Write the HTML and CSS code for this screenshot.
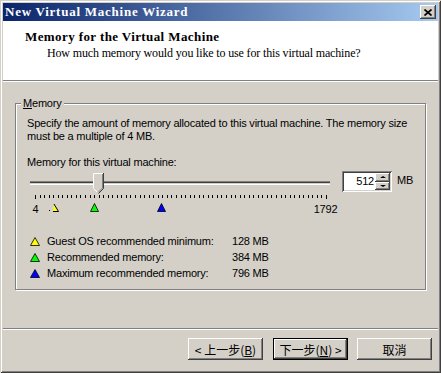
FILE: index.html
```html
<!DOCTYPE html>
<html lang="en">
<head>
  <meta charset="UTF-8">
  <title>New Virtual Machine Wizard</title>
  <link rel="stylesheet" href="styles.css">
</head>
<body>
  <div class="window">
    <!-- Title bar -->
    <div class="titlebar">
      <span class="title">New Virtual Machine Wizard</span>
      <button class="close" aria-label="Close">
        <svg width="8" height="7" viewBox="0 0 8 7"><path d="M0.5 0.5L7.5 6.5M7.5 0.5L0.5 6.5" stroke="#000" stroke-width="1.7"/></svg>
      </button>
    </div>

    <!-- Wizard header -->
    <div class="header">
      <div class="heading">Memory for the Virtual Machine</div>
      <div class="subheading">How much memory would you like to use for this virtual machine?</div>
    </div>

    <!-- Page content -->
    <div class="content">
      <fieldset class="group">
        <legend><u>M</u>emory</legend>
        <div class="group-body">
          <p class="desc">Specify the amount of memory allocated to this virtual machine. The memory size<br>must be a multiple of 4 MB.</p>
          <div class="field-label">Memory for this virtual machine:</div>

          <div class="slider-row">
            <svg class="slider" width="310" height="50" viewBox="0 0 310 50">
              <!-- channel -->
              <rect x="3" y="12" width="300" height="1" fill="#808080"/>
              <rect x="3" y="13" width="300" height="1" fill="#404040"/>
              <rect x="3" y="14" width="300" height="1" fill="#d4d0c8"/>
              <rect x="3" y="15" width="300" height="1" fill="#fff"/>
              <!-- ticks -->
              <path stroke="#000" stroke-width="1" d="M8.5 26v4M13.5 26v3M17.5 26v3M22.5 26v3M26.5 26v3M31.5 26v3M35.5 26v3M40.5 26v3M44.5 26v3M49.5 26v3M53.5 26v3M58.5 26v3M63.5 26v3M67.5 26v3M72.5 26v3M76.5 26v3M81.5 26v3M85.5 26v3M90.5 26v3M94.5 26v3M99.5 26v3M103.5 26v3M108.5 26v3M113.5 26v3M117.5 26v3M122.5 26v3M126.5 26v3M131.5 26v3M135.5 26v3M140.5 26v3M144.5 26v3M149.5 26v3M154.5 26v3M158.5 26v3M163.5 26v3M167.5 26v3M172.5 26v3M176.5 26v3M181.5 26v3M185.5 26v3M190.5 26v3M194.5 26v3M199.5 26v3M204.5 26v3M208.5 26v3M213.5 26v3M217.5 26v3M222.5 26v3M226.5 26v3M231.5 26v3M235.5 26v3M240.5 26v3M244.5 26v3M249.5 26v3M254.5 26v3M258.5 26v3M263.5 26v3M267.5 26v3M272.5 26v3M276.5 26v3M281.5 26v3M285.5 26v3M290.5 26v3M294.5 26v3M299.5 26v4"/>
              <!-- thumb -->
              <path d="M66 4h10v15l-5 5l-5-5z" fill="#d4d0c8"/>
              <path d="M66.5 19V4.5H76" stroke="#fff" fill="none"/>
              <path d="M66.5 19.5l4 4" stroke="#fff" fill="none"/>
              <path d="M76.5 4v15.5l-5 5" stroke="#404040" fill="none"/>
              <path d="M75.5 5v14l-4.5 4.5" stroke="#808080" fill="none"/>
              <!-- markers -->
              <rect x="22" y="41" width="1" height="1" fill="#000"/>
              <polygon points="26,42 27,35 31,42" fill="#ffff00"/>
              <path d="M27 35L31.5 42.5H26" stroke="#000" fill="none"/>
              <polygon points="63.5,42.5 67.5,34.5 71.5,42.5" fill="#00ff00" stroke="#000" stroke-width="0.8"/>
              <polygon points="130.5,42.5 134.5,34.5 138.5,42.5" fill="#0000ff" stroke="#000" stroke-width="0.8"/>
              <!-- scale labels -->
              <text x="8.5" y="44" text-anchor="middle">4</text>
              <text x="298.5" y="44" text-anchor="middle">1792</text>
            </svg>

            <div class="spin">
              <span class="spin-value">512</span>
              <div class="spin-btns">
                <span class="spin-btn up"></span>
                <span class="spin-btn down"></span>
              </div>
            </div>
            <span class="unit">MB</span>
          </div>

          <ul class="legend-list">
            <li>
              <svg class="marker" width="10" height="9" viewBox="0 0 10 9"><polygon points="0.5,8.5 5,0.5 9.5,8.5" fill="#ffff00" stroke="#000" stroke-width="0.8"/></svg>
              <span class="name">Guest OS recommended minimum:</span>
              <span class="value">128 MB</span>
            </li>
            <li>
              <svg class="marker" width="10" height="9" viewBox="0 0 10 9"><polygon points="0.5,8.5 5,0.5 9.5,8.5" fill="#00ff00" stroke="#000" stroke-width="0.8"/></svg>
              <span class="name">Recommended memory:</span>
              <span class="value">384 MB</span>
            </li>
            <li>
              <svg class="marker" width="10" height="9" viewBox="0 0 10 9"><polygon points="0.5,8.5 5,0.5 9.5,8.5" fill="#0000ff" stroke="#000" stroke-width="0.8"/></svg>
              <span class="name">Maximum recommended memory:</span>
              <span class="value">796 MB</span>
            </li>
          </ul>
        </div>
      </fieldset>
    </div>

    <!-- Wizard buttons -->
    <div class="buttons">
      <button class="btn back">&lt; 上一步(<u>B</u>)</button>
      <button class="btn next default">下一步(<u>N</u>) &gt;</button>
      <button class="btn">取消</button>
    </div>
  </div>
</body>
</html>
```

FILE: styles.css
```css
body {
  margin: 0;
  font-family: "Liberation Sans", Arial, sans-serif;
  font-size: 11px;
  letter-spacing: -0.2px;
  color: #000;
}

.window {
  width: 441px;
  height: 373px;
  box-sizing: border-box;
  padding: 3px;
  background: #d4d0c8;
  box-shadow: inset 1px 1px #d4d0c8, inset -1px -1px #404040, inset 2px 2px #fff, inset -2px -2px #808080;
  display: flex;
  flex-direction: column;
}

/* title bar */
.titlebar {
  height: 18px;
  flex: none;
  display: flex;
  align-items: center;
  justify-content: space-between;
  padding: 0 2px;
  background: linear-gradient(to right, #0a246a, #a6caf0);
}

.title {
  color: #fff;
  font: bold 13px "Liberation Serif", serif;
  letter-spacing: 0.75px;
}

.close {
  width: 16px;
  height: 14px;
  padding: 0;
  border: 0;
  background: #d4d0c8;
  box-shadow: inset -1px -1px #404040, inset 1px 1px #fff, inset -2px -2px #808080;
  display: flex;
  align-items: center;
  justify-content: center;
}

.close svg {
  display: block;
}

/* header */
.header {
  height: 60px;
  flex: none;
  box-sizing: border-box;
  padding: 8px 0 0 22px;
  background: #fff;
  border-bottom: 1px solid #808080;
  font-family: "Liberation Serif", serif;
  line-height: 16px;
}

.heading {
  font-size: 13px;
  font-weight: bold;
  letter-spacing: 0.4px;
}

.subheading {
  margin-left: 22px;
  font-size: 12px;
  letter-spacing: -0.15px;
}

/* content */
.content {
  flex: 1;
  border-top: 1px solid #fff;
  padding: 15px 12px 0;
}

.group {
  margin: 0;
  padding: 0;
  min-width: 0;
  border: 1px solid #808080;
  box-shadow: inset 1px 1px #fff, 1px 1px #fff;
}

.group legend {
  margin-left: 5px;
  padding: 0 2px;
  line-height: 13px;
  background: #d4d0c8;
}

.group-body {
  padding: 7px 11px 8px;
}

.desc {
  margin: 0;
  line-height: 13px;
}

.field-label {
  margin-top: 13px;
  line-height: 13px;
}

.slider-row {
  display: flex;
  align-items: flex-start;
}

.slider {
  display: block;
  overflow: visible;
  font-size: 11px;
}

.spin {
  margin: 2px 0 0 5px;
  width: 50px;
  height: 21px;
  box-sizing: border-box;
  padding: 2px;
  display: flex;
  background: #fff;
  box-shadow: inset 1px 1px #808080, inset -1px -1px #fff, inset 2px 2px #404040, inset -2px -2px #d4d0c8;
}

.spin-value {
  flex: 1;
  text-align: right;
  line-height: 17px;
  padding-right: 1px;
}

.spin-btns {
  width: 15px;
  display: flex;
  flex-direction: column;
}

.spin-btn {
  flex: 1;
  display: flex;
  align-items: center;
  justify-content: center;
  background: #d4d0c8;
  box-shadow: inset -1px -1px #404040, inset 1px 1px #fff, inset -2px -2px #808080;
}

.spin-btn::after {
  content: "";
  border-left: 3px solid transparent;
  border-right: 3px solid transparent;
}

.spin-btn.up::after {
  border-bottom: 2px solid #000;
}

.spin-btn.down::after {
  border-top: 2px solid #000;
}

.unit {
  margin: 5px 0 0 5px;
  line-height: 13px;
}

.legend-list {
  list-style: none;
  margin: 14px 0 0;
  padding: 0;
}

.legend-list li {
  display: flex;
  align-items: center;
  height: 16px;
}

.marker {
  display: block;
  margin: 0 7px 0 3px;
}

.name {
  width: 185px;
}

/* buttons */
.buttons {
  height: 42px;
  flex: none;
  box-sizing: border-box;
  border-top: 1px solid #808080;
  box-shadow: inset 0 1px #fff;
  display: flex;
  justify-content: flex-end;
  align-items: flex-start;
  padding: 9px 6px 0 0;
}

.btn {
  width: 75px;
  height: 22px;
  padding: 0;
  border: 0;
  background: #d4d0c8;
  font: 12px "Noto Sans CJK TC", sans-serif;
  color: #000;
  box-shadow: inset -1px -1px #404040, inset 1px 1px #fff, inset -2px -2px #808080;
}

.btn.back {
  margin-right: 10px;
}

.btn.next {
  margin-right: 9px;
}

.btn.default {
  box-shadow: inset 0 0 0 1px #000, inset -2px -2px #404040, inset 2px 2px #fff, inset -3px -3px #808080;
}
```
